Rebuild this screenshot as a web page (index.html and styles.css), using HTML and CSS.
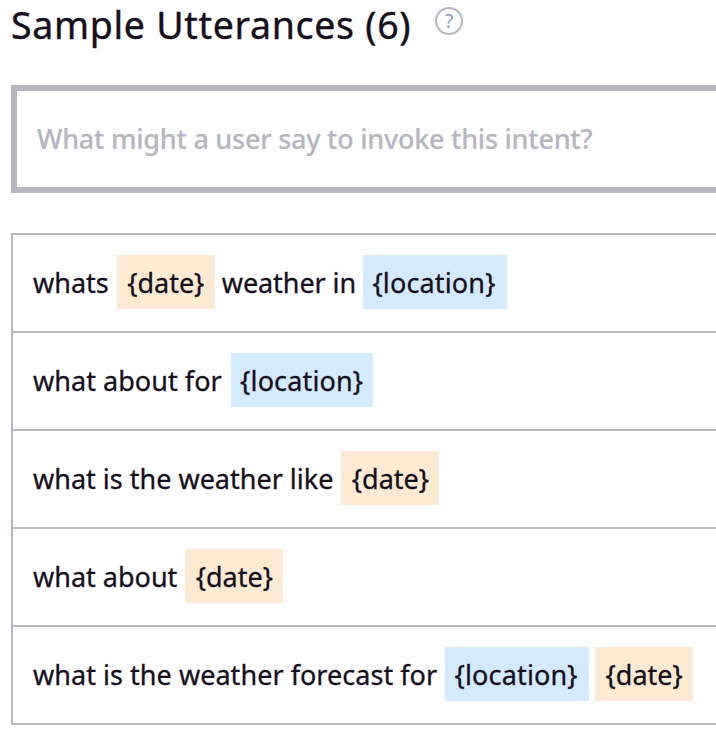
FILE: index.html
```html
<!DOCTYPE html>
<html lang="en">
<head>
<meta charset="utf-8">
<title>Sample Utterances</title>
<link rel="stylesheet" href="styles.css">
</head>
<body>
<main class="intent">
  <header class="heading">
    <h1 class="title">Sample Utterances (6)</h1>
    <svg class="help" viewBox="0 0 28 28" aria-label="Help"><circle cx="14" cy="14" r="13"/><text x="14" y="20.5" text-anchor="middle">?</text></svg>
  </header>
  <input class="utterance-input" type="text" placeholder="What might a user say to invoke this intent?">
  <ul class="utterances">
    <li class="utterance"><span class="phrase">whats</span><span class="slot date">{date}</span><span class="tight">weather in</span><span class="slot location">{location}</span></li>
    <li class="utterance"><span class="phrase wide">what about for</span><span class="slot location narrow">{location}</span></li>
    <li class="utterance"><span class="phrase">what is the weather like</span><span class="slot date">{date}</span></li>
    <li class="utterance"><span class="phrase">what about</span><span class="slot date">{date}</span></li>
    <li class="utterance"><span class="phrase wide">what is the weather forecast for</span><span class="slot location">{location}</span><span class="slot date last">{date}</span></li>
  </ul>
</main>
</body>
</html>
```
FILE: styles.css
```css
* { box-sizing: border-box; }
body {
  margin: 0;
  background: #fff;
  color: #16101c;
  font-family: "Noto Sans", "Open Sans", sans-serif;
}
.intent { padding-left: 11px; }
.heading { display: flex; height: 85px; }
.title {
  margin: 0;
  font-size: 37.5px;
  font-weight: 400;
  line-height: 49px;
  white-space: nowrap;
  letter-spacing: 0.69px;
  -webkit-text-stroke: 0.4px currentColor;
}
.help { width: 28px; height: 28px; margin: 7px 0 0 24px; }
.help circle { fill: none; stroke: #b6b6c0; stroke-width: 2; }
.help text { fill: #8e9cb4; font-size: 19px; }
.utterance-input {
  display: block;
  width: 100%;
  height: 108px;
  padding: 0 20px 2px;
  border: 6px solid #b6b6c0;
  border-right: 0;
  border-radius: 0;
  outline: none;
  font: 500 27px "Noto Sans", sans-serif;
  letter-spacing: -0.24px;
  -webkit-text-stroke: 0.2px #b6b6c0;
}
.utterance-input::placeholder { color: #b6b6c0; opacity: 1; }
.utterances {
  margin: 40px 0 0;
  padding: 0;
  list-style: none;
  border: 2px solid #b6b6c0;
  border-width: 0 0 2px 2px;
}
.utterance {
  display: flex;
  align-items: center;
  gap: 7px;
  height: 98px;
  padding: 0 0 2px 20px;
  border-top: 2px solid #b6b6c0;
  font-size: 27px;
  white-space: nowrap;
  -webkit-text-stroke: 0.3px currentColor;
}
.phrase { margin-right: 1px; }
.wide { letter-spacing: 0.04px; }
.tight { letter-spacing: -0.08px; }
.slot { height: 54px; line-height: 56px; text-align: center; }
.date { width: 98px; background: #fcebd2; }
.date.last { margin-left: -1px; }
.location { width: 144px; padding-right: 2px; background: #d4eaff; letter-spacing: 0.15px; }
.location.narrow { width: 142px; margin-left: 1px; padding-right: 0; }
```
